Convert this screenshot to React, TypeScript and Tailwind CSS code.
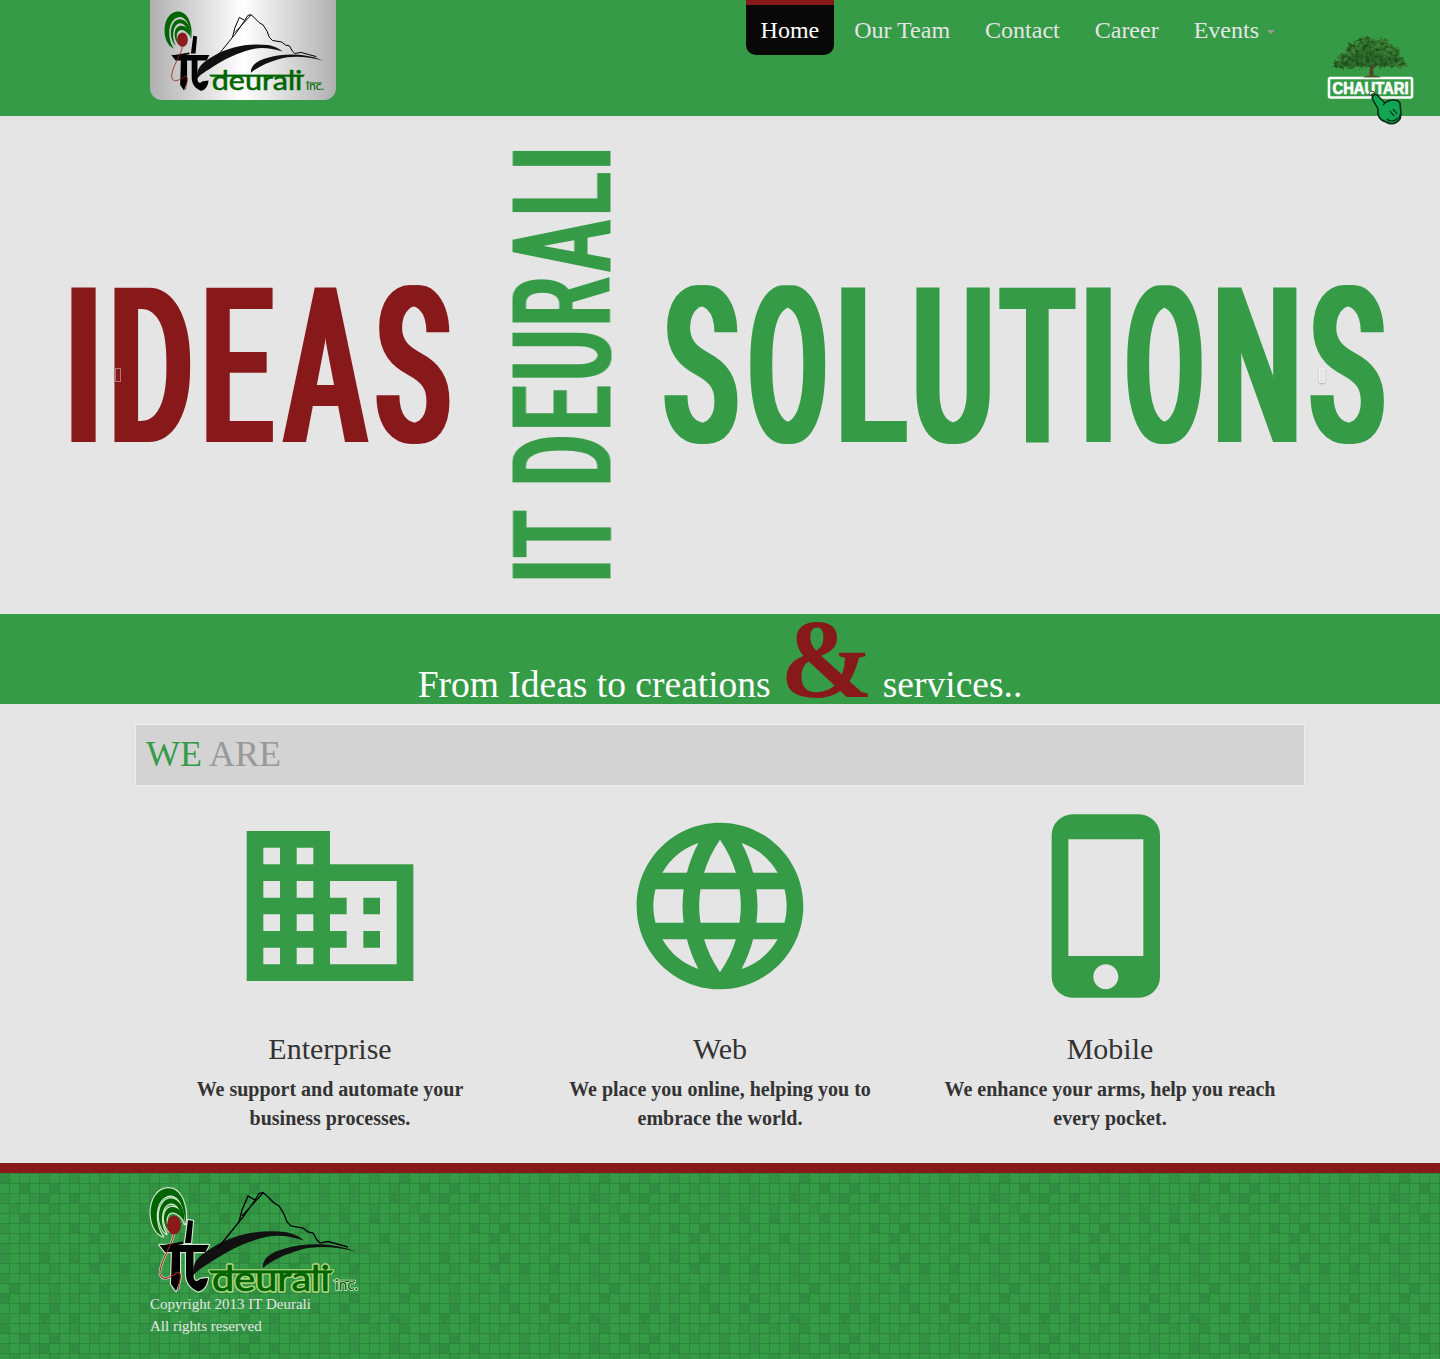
import { useMemo } from "react";
import { MdDomain, MdLanguage, MdPhoneIphone } from "react-icons/md";

const GREEN = "#359b47";
const RED = "#87191a";

type Letter = [string, number, number];

const IDEAS: Letter[] = [
  ["I", 71, 96],
  ["D", 114, 190.5],
  ["E", 206, 273.5],
  ["A", 282, 368.5],
  ["S", 376, 450],
];
const SOLUTIONS: Letter[] = [
  ["S", 664, 738],
  ["O", 750, 825.5],
  ["L", 841, 907],
  ["U", 916, 990],
  ["T", 999, 1076],
  ["I", 1086, 1111],
  ["O", 1127, 1202],
  ["N", 1217.5, 1296.5],
  ["S", 1310, 1384.5],
];
const IT_DEURALI: Letter[] = [
  ["I", 0.5, 15.5],
  ["T", 22, 68.5],
  ["D", 96, 142],
  ["E", 151.5, 192.5],
  ["U", 201, 246.5],
  ["R", 256, 302],
  ["A", 307, 359.5],
  ["L", 366.5, 406.5],
  ["I", 413, 428],
];

/* Sets each letter so that its ink, widened by `grow` on both sides, spans the given range. */
function FittedWord({ letters, size, grow, filter, fill, y }: { letters: Letter[]; size: number; grow: number; filter: string; fill: string; y: number }) {
  const spans = useMemo(() => {
    const ctx = document.createElement("canvas").getContext("2d")!;
    ctx.font = `500 ${size}px Roboto`;
    return letters.map(([ch, from, to]) => {
      const m = ctx.measureText(ch);
      const ink = m.actualBoundingBoxRight + m.actualBoundingBoxLeft;
      const s = (to - from - 2 * grow) / ink;
      return { ch, x: from + grow + m.actualBoundingBoxLeft * s, len: m.width * s };
    });
  }, [letters, size, grow]);
  return (
    <text y={y} fontFamily="Roboto, sans-serif" fontWeight={500} fontSize={size} fill={fill} filter={filter}>
      {spans.map((s, i) => (
        <tspan key={i} x={s.x} textLength={s.len} lengthAdjust="spacingAndGlyphs">
          {s.ch}
        </tspan>
      ))}
    </text>
  );
}

const PLUME_OUTER = "M13 48.500C-4 42-4 3 17 .3C31-1 38 18 35.500 36C34 18 29 7.500 20 7.500C5 9 3 35 13 48.500Z";
const PLUME_MIDDLE = "M16.500 46C5 37 7 12 20 10.500C30 10 35.500 22 34.500 36C31 22 27 15.500 21 15.500C11 16 9 36 16.500 46Z";
const PLUME_INNER = "M19 43.500C11 34 13 20 21.500 19C28 18.500 33 24 33.500 32C29 26 25 24 21.500 24.500C16 26 15 34 19 43.500Z";

function LogoShapes() {
  return (
    <>
      <path d={PLUME_OUTER} fill="#006400" />
      <path d={PLUME_MIDDLE} fill="#006400" />
      <path d={PLUME_INNER} fill="#006400" />
      <path d="M9.500 57H59L55.500 64H15Z" fill="#000" />
      <path d="M14 57L33 53.500V56L22 58Z" fill="#000" />
      <path d="M38 32L43 33L41 55H35Z" fill="#000" />
      <path d="M22 62H30V92L26 103L21 96Z" fill="#000" />
      <path d="M36 62H43.500V88C44 94 47 94 50 91L58 90C57 98 53 103 48 103.500C40 100 36 94 36 86Z" fill="#000" />
      <path d="M43 88C42 72 50 67 65 58C84 46 112 41 135 44C145 46 150 49 154 52.500C140 48 128 46.500 116 49C94 54 78 63 64 72C54 79 47 82 43 88Z" fill="#111" />
      <path d="M113 80C112 70 122 64 135 60.500C158 54 185 55 207 64C187 59 167 57 150 62C136 66 122 72 113 80Z" fill="#111" />
      <path d="M68 60L76 50L89 34L92 22L98 8L105 12L109 5.500L113 4.500L116 7L124 15L129 18L134 26L137 34L141 38L153 40L158 44L163 45L167 52L170 55L178 53.500L187 56L198 59" fill="none" stroke="#000" strokeWidth="1.300" />
      <path d="M89 34L94 28L105 12M92 28L113 5" fill="none" stroke="#000" strokeWidth="1.200" />
    </>
  );
}

function Logo({ halo, className }: { halo?: boolean; className: string }) {
  const font = { fontFamily: "Lato, sans-serif" };
  return (
    <svg viewBox="0 0 208 106" className={className} overflow="visible">
      {halo && (
        <g stroke="#cfe6cc" strokeWidth="2.400" strokeLinejoin="round" fill="#cfe6cc">
          <path d={PLUME_OUTER} />
          <path d={PLUME_MIDDLE} fill="none" />
          <path d={PLUME_INNER} fill="none" />
          <path d="M9.500 57H59L55.500 64H43.500V88C44 94 47 94 50 91L58 90C57 98 53 103 48 103.500C40 100 36 94 36 86V64H30V92L26 103L21 96L22 64H15Z" />
          <path d="M38 32L43 33L41 55H35Z" />
          <path d="M24 46C22 58 9 74 10 86C13 95 22 88 28 84C33 86 29 94 28 102" fill="none" />
        </g>
      )}
      <LogoShapes />
      <ellipse cx="24" cy="37" rx="7" ry="9.500" fill="#8b1a1a" />
      <path d="M24 46C22 58 9 74 10 86C13 95 22 88 28 84C33 86 29 94 28 102" fill="none" stroke="#a02822" strokeWidth="1.100" />
      {halo && (
        <g fill="none" stroke="#b5dc82" strokeWidth="3.400" strokeLinejoin="round">
          <path d="M59 82.500H183L181 85.300H61Z" strokeWidth="2.600" />
          <text x="62" y="102.500" textLength="118" lengthAdjust="spacingAndGlyphs" fontSize="35" fontWeight="400" style={font} aria-hidden="true">
            deurali
          </text>
        </g>
      )}
      <g fill="#006400" stroke="#006400" strokeWidth=".7">
        <path d="M59 82.500H183L181 85.300H61Z" strokeWidth=".3" />
        <text x="62" y="102.500" textLength="118" lengthAdjust="spacingAndGlyphs" fontSize="35" fontWeight="400" style={font}>
          deurali
        </text>
      </g>
      <g fill="#006400" stroke={halo ? "#d5ead0" : "none"} strokeWidth="1.600" paintOrder="stroke">
        <path d="M184 92.500H205V94H185Z" />
        <text x="185" y="102" textLength="23" lengthAdjust="spacingAndGlyphs" fontSize="16" fontWeight="500" style={font}>
          inc.
        </text>
      </g>
    </svg>
  );
}

const LEAVES: [number, number, number, number][] = [
  [13, 30, 7, 4], [20, 24, 10, 6], [20, 31, 9, 4], [28, 16, 10, 7], [32, 27, 12, 7],
  [40, 9, 11, 6], [44, 19, 14, 9], [54, 12, 11, 7], [55, 26, 12, 8], [64, 19, 9, 7],
  [67, 27, 10, 6], [73, 30, 7, 4], [42, 29, 8, 4],
];

function Chautari() {
  return (
    <svg viewBox="0 0 88 92" overflow="visible" className="absolute left-[1327px] top-[34px] h-[92px] w-[88px]">
      <defs>
        <filter id="foliage" x="-10%" y="-10%" width="120%" height="120%" colorInterpolationFilters="sRGB">
          <feTurbulence type="fractalNoise" baseFrequency="0.28" numOctaves="3" seed="4" result="n" />
          <feDisplacementMap in="SourceGraphic" in2="n" xChannelSelector="R" yChannelSelector="G" scale="8" result="d" />
          <feColorMatrix in="n" type="matrix" values="0 0 0 0 .11 0 0 0 0 .3 0 0 0 0 .11 3 0 0 0 -1.2" result="dark" />
          <feComposite in="dark" in2="d" operator="in" result="shade" />
          <feMerge>
            <feMergeNode in="d" />
            <feMergeNode in="shade" />
          </feMerge>
        </filter>
      </defs>
      <path d="M42 44L43 33L34 26L44 30L46 22L47 31L57 26L46 35L47 44Z" fill="#54402a" />
      <g filter="url(#foliage)">
        {LEAVES.map(([cx, cy, rx, ry], i) => (
          <ellipse key={i} cx={cx} cy={cy} rx={rx} ry={ry} fill={i % 2 ? "#3b8034" : "#2f6e2b"} />
        ))}
      </g>
      <rect x="2" y="44" width="83" height="19.500" rx="1.500" fill={GREEN} stroke="#fff" strokeWidth="2.600" />
      <path d="M36 43.500C40 40 50 40 54 43.500Z" fill="#4c5a2a" />
      <text x="5.500" y="59.500" textLength="76" lengthAdjust="spacingAndGlyphs" fontSize="16.500" fontWeight="700" fill="#fff" stroke="#fff" strokeWidth=".7" style={{ fontFamily: "Liberation Sans, sans-serif" }}>
        CHAUTARI
      </text>
      <path d="M42 61C42 57 46 56 48 59M44 62C44 59 47 59 48 61" fill="none" stroke="#222" strokeWidth="1" />
      <path d="M45 64C46 60 50 59 52 63L58 69C62 65 71 65 73 69L74 80C73 82 74 83 73 85C69 90 64 91 59 88C52 86 50 82 51 75Z" fill="#10a552" stroke="#0b2414" strokeWidth="1.500" strokeLinejoin="round" />
      <path d="M60 85C65 90 74 84 73 80M63 77L67 82M66 75L70 80M58 69L56 71" fill="none" stroke="#0b2414" strokeWidth="1.200" />
    </svg>
  );
}

const TILE_ROWS = [
  [0, 4, 7, 10, 14, 17],
  [2, 5, 9, 12, 15, 19],
  [0, 3, 4, 7, 12, 15, 19],
  [1, 5, 8, 10, 14, 17],
  [2, 4, 9, 12, 14, 17, 19],
  [0, 5, 7, 10, 15],
  [2, 5, 9, 11, 14, 18],
  [0, 4, 7, 12, 15, 16, 19],
];
const ROW_ORDER = [0, 1, 2, 3, 4, 5, 6, 7, 0, 1, 2, 3, 5, 6, 7, 0, 1, 2, 3];

function FooterTiles() {
  return (
    <svg className="absolute inset-0 h-full w-full" aria-hidden="true">
      <defs>
        <filter id="grain" x="0" y="0" width="100%" height="100%" colorInterpolationFilters="sRGB">
          <feTurbulence type="fractalNoise" baseFrequency="0.5" numOctaves="2" seed="2" result="n" />
          <feColorMatrix in="n" type="matrix" values="0 0 0 0 .26 0 0 0 0 .62 0 0 0 0 .32 2 0 0 0 -1" result="specks" />
          <feComposite in="specks" in2="SourceGraphic" operator="in" result="s" />
          <feMerge>
            <feMergeNode in="SourceGraphic" />
            <feMergeNode in="s" />
          </feMerge>
        </filter>
        <pattern id="tiles" width="200" height="190" patternUnits="userSpaceOnUse">
          <g filter="url(#grain)">
            {ROW_ORDER.map((r, y) =>
              TILE_ROWS[r].map((c) => (
                <rect key={`${y}-${c}`} x={c * 10} y={y * 10} width="9" height="10" fill={(c + y) % 3 ? "#329143" : "#2f8b40"} />
              )),
            )}
          </g>
          {Array.from({ length: 20 }, (_, i) => (
            <path key={i} d={`M${i * 10 + 9.5} 0V190`} stroke="#2c873c" strokeWidth="1" />
          ))}
          {ROW_ORDER.map((_, i) => (
            <path key={i} d={`M0 ${i * 10 + 0.5}H200`} stroke="#2c873c" strokeWidth="1" />
          ))}
        </pattern>
      </defs>
      <rect width="100%" height="100%" fill="url(#tiles)" />
    </svg>
  );
}

const SERVICES = [
  { Icon: MdDomain, title: "Enterprise", lines: ["We support and automate your", "business processes."] },
  { Icon: MdLanguage, title: "Web", lines: ["We place you online, helping you to", "embrace the world."] },
  { Icon: MdPhoneIphone, title: "Mobile", lines: ["We enhance your arms, help you reach", "every pocket."] },
];

export default function App() {
  return (
    <div className="relative w-[1440px] overflow-hidden bg-[#e5e5e5] font-['Liberation_Serif',serif] text-[#333]">
      <header className="h-[116px] bg-[#359b47]">
        <div className="mx-auto flex w-[1170px] items-start justify-between px-[15px]">
          <div className="h-[100px] w-[186px] rounded-b-[12px] bg-[linear-gradient(90deg,#b0b0b0_0%,#ffffff_50%,#b0b0b0_100%)] pl-[14px] pt-[11px]">
            <Logo className="h-[82px] w-[160px]" />
          </div>
          <nav className="flex gap-[5px] text-[24px] leading-[20px] text-[#e5e5e5]">
            <a className="h-[55px] rounded-b-[10px] border-t-[5px] border-[#87191a] bg-[#080808] px-[15px] pt-[15px] text-white">Home</a>
            <a className="px-[15px] pt-[20px]">Our Team</a>
            <a className="px-[15px] pt-[20px]">Contact</a>
            <a className="px-[15px] pt-[20px]">Career</a>
            <a className="flex items-start pl-[15px] pt-[20px]">
              Events
              <span className="ml-[8px] mr-[15px] mt-[10px] border-x-4 border-t-4 border-x-transparent border-t-[#999]" />
            </a>
          </nav>
        </div>
      </header>
      <Chautari />

      <section className="relative h-[498px]">
        <svg width="1440" height="498" className="block">
          <defs>
            <filter id="widen" x="-2%" y="-2%" width="104%" height="104%" colorInterpolationFilters="sRGB">
              <feMorphology operator="dilate" radius="4 0" />
            </filter>
            <filter id="widenSmall" x="-2%" y="-2%" width="104%" height="104%" colorInterpolationFilters="sRGB">
              <feMorphology operator="dilate" radius="2 0" />
            </filter>
          </defs>
          <FittedWord letters={IDEAS} size={218} grow={4} filter="url(#widen)" fill={RED} y={325.5} />
          <g transform="translate(610.5 463) rotate(-90)">
            <FittedWord letters={IT_DEURALI} size={137.500} grow={2} filter="url(#widenSmall)" fill={GREEN} y={0} />
          </g>
          <FittedWord letters={SOLUTIONS} size={218} grow={4} filter="url(#widen)" fill={GREEN} y={325.5} />
        </svg>
        <span className="absolute left-[115px] top-[252px] h-[14px] w-[6px] border border-white opacity-40 shadow-[0_1px_2px_rgba(0,0,0,0.3)]" />
        <span className="absolute left-[1319px] top-[252px] h-[15px] w-[6px] border border-white opacity-50 shadow-[0_1px_2px_rgba(0,0,0,0.5)]" />
      </section>

      <section className="h-[90px] whitespace-nowrap bg-[#359b47] text-center text-[37.5px] leading-[90px] text-white">
        From Ideas to creations <span className="text-[112px] font-bold text-[#87191a]">&amp;</span> services..
      </section>

      <section className="mx-auto mt-5 w-[1170px]">
        <h2 className="h-[62px] border border-[#eee] bg-[#d3d3d3] px-[10px] pt-[9px] text-[36px] leading-[40px] text-[#999]">
          <span className="text-[#359b47]">WE</span> ARE
        </h2>
        <div className="mt-5 grid h-[357px] grid-cols-3 text-center">
          {SERVICES.map(({ Icon, title, lines }) => (
            <div key={title} className="flex flex-col items-center">
              <Icon className="h-[200px] w-[200px] text-[#359b47]" />
              <h3 className="mt-[26px] text-[30px] leading-[33px]">{title}</h3>
              <p className="mt-[10px] text-[20px] font-bold leading-[29px]">
                {lines[0]}
                <br />
                {lines[1]}
              </p>
            </div>
          ))}
        </div>
      </section>

      <footer className="relative h-[196px] border-t-[10px] border-[#87191a] bg-[#359b47]">
        <FooterTiles />
        <div className="relative mx-auto w-[1170px] px-[15px] pt-[15px] text-[15px] leading-[22px] text-[#e5e5e5]">
          <Logo halo className="mb-[-1px] block h-[106px] w-[208px]" />
          <p>Copyright 2013 IT Deurali</p>
          <p>All rights reserved</p>
        </div>
      </footer>
    </div>
  );
}
